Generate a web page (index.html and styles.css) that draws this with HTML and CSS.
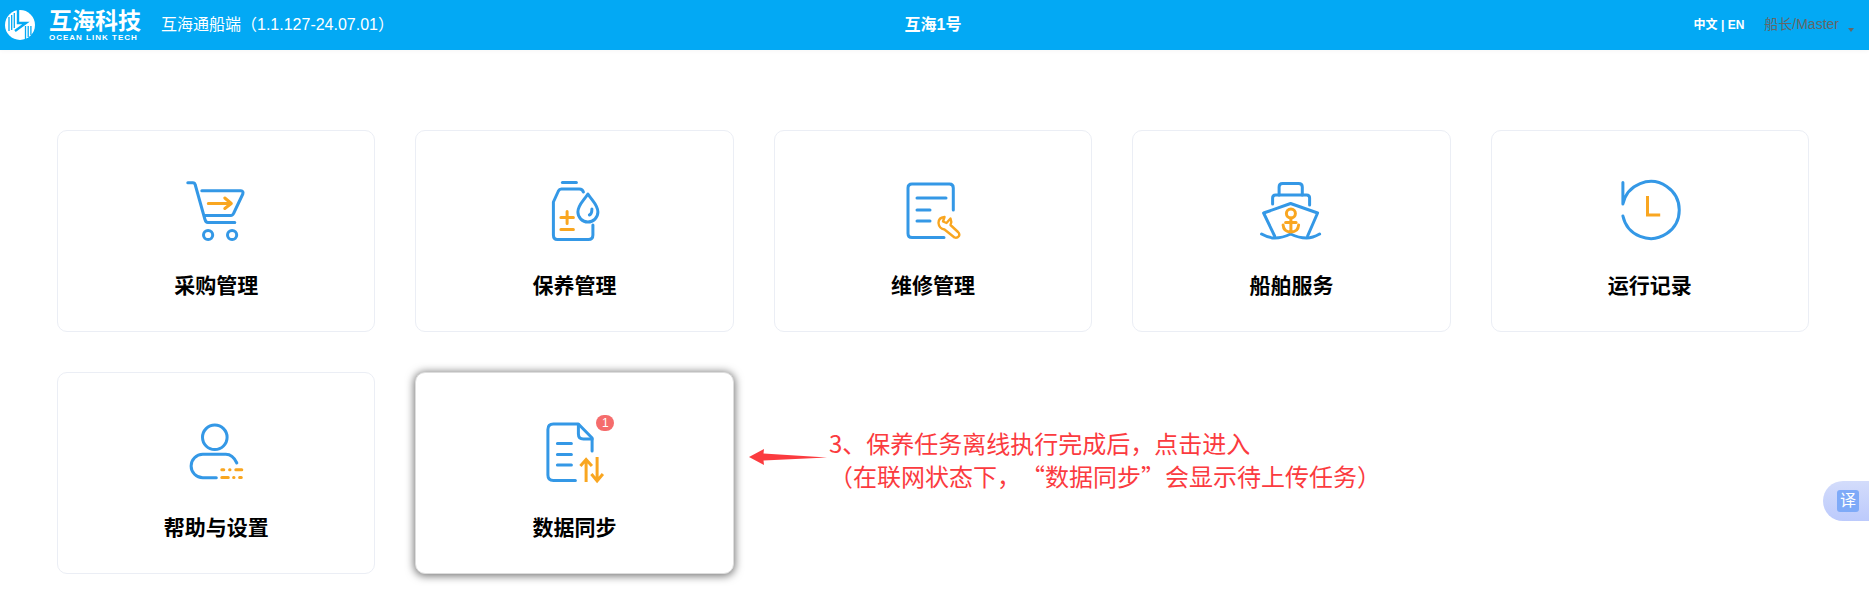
FILE: index.html
```html
<!DOCTYPE html>
<html lang="zh-CN">
<head>
<meta charset="UTF-8">
<title>互海通船端</title>
<link rel="stylesheet" href="styles.css">
</head>
<body>
  <!-- Top bar -->
  <header class="topbar">
    <div class="topbar-left">
      <div class="logo">
        <svg class="logo-mark" viewBox="0 0 30 30">
          <circle cx="15" cy="15" r="15" fill="#fff"/>
          <path d="M4 7V21M6.700 5V20M9.300 3V18" stroke="#03a9f4" stroke-width="1.300" fill="none"/>
          <path d="M13 0V13H21L10 21" stroke="#03a9f4" stroke-width="2.400" fill="none"/>
          <path d="M20.500 16V29M23.200 16V27M25.900 16V25" stroke="#03a9f4" stroke-width="1.300" fill="none"/>
        </svg>
        <div class="logo-text">
          <div class="logo-cn">互海科技</div>
          <div class="logo-en">OCEAN LINK TECH</div>
        </div>
      </div>
      <div class="app-name">互海通船端（1.1.127-24.07.01）</div>
    </div>
    <div class="ship-name">互海1号</div>
    <div class="topbar-right">
      <span class="lang">中文 | EN</span>
      <span class="user">船长/Master</span>
      <span class="caret"></span>
    </div>
  </header>

  <!-- Module cards -->
  <main class="modules">
    <a class="card">
      <svg class="card-icon" viewBox="6.200 0 100 80">
        <g class="blue">
          <path d="M28 12.700H33Q35 12.700 35.500 15L45 49Q46 52.500 48 52.500H75"/>
          <path d="M42 20.700H81Q84 21 83 24L74 43Q73 45.500 71 45.500H45"/>
          <circle cx="48.300" cy="65" r="4.600"/>
          <circle cx="72.300" cy="65" r="4.600"/>
        </g>
        <path class="orange" d="M48.500 33.500H71M65 28L71.500 33.500L65 38.500"/>
      </svg>
      <div class="card-title">采购管理</div>
    </a>
    <a class="card">
      <svg class="card-icon" viewBox="-5.400 0 100 80">
        <g class="blue">
          <path d="M32 12.500H46"/>
          <path d="M53 22Q52 19 49 19H31Q29 19 28 21L23 32V65Q23 69.500 27 69.500H58Q62.500 69.500 62.500 65V55"/>
          <path d="M57.500 24C62 31 67.500 35 67.500 42A10 10 0 0 1 47.500 42C47.500 35 53 31 57.500 24Z"/>
          <path d="M61.500 39Q61.500 44 59 45"/>
        </g>
        <path class="orange" d="M30.500 47.500H43M36.700 41.500V53.500M30.500 59.500H43"/>
      </svg>
      <div class="card-title">保养管理</div>
    </a>
    <a class="card">
      <svg class="card-icon" viewBox="-7 0 100 80">
        <g class="blue">
          <path d="M63.300 40V18Q63.300 14 59.500 14H22Q18 14 18 18V63.500Q18 67.500 22 67.500H54"/>
          <path d="M27 28H56M27 40H40M27 51H40"/>
        </g>
        <path class="orange thin" d="M54.500 47Q48.500 47.500 48.500 53Q49 58.500 54.500 59.500L64.500 67.500Q67 68.500 69 66Q70 64 68 62L60.500 55Q62 51.500 60.500 48.500L56.500 53L53 51.500Z"/>
      </svg>
      <div class="card-title">维修管理</div>
    </a>
    <a class="card">
      <svg class="card-icon" viewBox="-8.600 0 100 80">
        <g class="blue">
          <path d="M29.500 25V17Q29.500 13.500 33 13.500H49Q52.700 13.500 52.700 17V25"/>
          <path d="M23 34V28Q23 25 26 25H57Q60 25 60 28V35"/>
          <path d="M25 66L14 43L41 33.500L68 43L58 66"/>
          <path d="M12 64Q19 68 25 68Q33 68 41 64Q49 68 57 68Q63 68 70 64"/>
        </g>
        <g class="orange">
          <circle cx="41.300" cy="43.500" r="4.500"/>
          <path d="M41.300 48V62M36 52.500H46.500M33.500 55Q34 62 41.300 62Q48.500 62 49 55"/>
        </g>
      </svg>
      <div class="card-title">船舶服务</div>
    </a>
    <a class="card">
      <svg class="card-icon" viewBox="-0.200 0 100 80">
        <path class="blue" d="M22.700 12.500V34A28.500 28.500 0 1 1 22.700 46"/>
        <path class="orange butt" d="M47.300 26V45H60"/>
      </svg>
      <div class="card-title">运行记录</div>
    </a>
    <a class="card">
      <svg class="card-icon" viewBox="-3.800 2 100 80">
        <g class="blue">
          <circle cx="45" cy="27.300" r="12.300"/>
          <path d="M46.500 67.700H33A11.700 11.700 0 0 1 33 44.300H56Q63 44.300 67 53"/>
        </g>
        <path class="orange" d="M52 59.700H54M59.800 59.700H60.200M66 59.700H72M52 67.500H58.500M63.800 67.500H64.200M69.800 67.500H71.500"/>
      </svg>
      <div class="card-title">帮助与设置</div>
    </a>
    <a class="card card-hover">
      <svg class="card-icon" viewBox="-5.400 2 100 80">
        <g class="blue">
          <path d="M61.700 41V28L48 14H23Q17.500 14 17.500 19.500V65Q17.500 70.500 23 70.500H45"/>
          <path d="M48 14.500V24Q48 29 53 29H61.700"/>
          <path d="M27 33.500H41M27 44.500H41M27 55H41"/>
        </g>
        <path class="orange butt" d="M55.700 72V49.500M50 56L55.700 49.500L61.500 56M66.700 47V71M61 64L66.700 71L72.500 64"/>
      </svg>
      <span class="badge">1</span>
      <div class="card-title">数据同步</div>
    </a>
  </main>

  <!-- Annotation drawn over the page -->
  <svg class="note-arrow" viewBox="0 0 80 20">
    <path d="M0 9L15 1L14.500 5.500L78 9.500L14.500 12.500L15 17Z" fill="#fb3b3f"/>
  </svg>
  <div class="note">
    <div>3、保养任务离线执行完成后，点击进入</div>
    <div>（在联网状态下，“数据同步”会显示待上传任务）</div>
  </div>

  <div class="translate"><span class="translate-btn">译</span></div>
</body>
</html>
```

FILE: styles.css
```css
* { box-sizing: border-box; margin: 0; padding: 0; }
html, body { height: 100%; overflow: hidden; }
body {
  position: relative;
  background: #fff;
  font-family: "Liberation Sans", "Noto Sans CJK SC", sans-serif;
  color: #000;
}

/* Top bar */
.topbar {
  display: grid;
  grid-template-columns: 1fr auto 1fr;
  align-items: center;
  height: 50px;
  padding: 0 15px 4px 5px;
  background: #03a9f4;
  color: #fff;
  box-shadow: 0 1px 4px rgba(0, 0, 0, 0.04);
}
.topbar-left { display: flex; align-items: center; }
.logo { display: flex; align-items: center; gap: 14px; margin-top: 4px; }
.logo-mark { width: 30px; height: 30px; }
.logo-cn { font-size: 23px; line-height: 23px; font-weight: 700; white-space: nowrap; margin-top: 2px; }
.logo-en { font-size: 8px; line-height: 9px; font-weight: 700; letter-spacing: 1px; white-space: nowrap; }
.app-name { margin-left: 20px; font-size: 16px; white-space: nowrap; }
.ship-name { font-size: 16px; font-weight: 700; padding-left: 7px; }
.topbar-right { display: flex; align-items: center; justify-content: flex-end; }
.lang { font-size: 12px; font-weight: 700; }
.user { margin-left: 20px; font-size: 14px; color: #666; }
.caret {
  margin: 14px 0 0 9px;
  border-style: solid;
  border-width: 4px 3.500px 0;
  border-color: #666 transparent transparent;
}

/* Module cards */
.modules {
  display: grid;
  grid-template-columns: repeat(5, 1fr);
  grid-auto-rows: 202px;
  gap: 40px;
  padding: 80px 60px 0 57px;
}
.card {
  position: relative;
  display: flex;
  flex-direction: column;
  align-items: center;
  padding-top: 39px;
  background: #fff;
  border: 1px solid #ebeef5;
  border-radius: 10px;
}
.card-hover {
  border-color: #ddd;
  box-shadow: 0 1px 8px 1px rgba(0, 0, 0, 0.55);
}
.card-icon { display: block; width: 100px; height: 80px; flex: none; }
.card-title { margin-top: 22px; font-size: 21px; line-height: 28px; font-weight: 700; }

.blue, .blue * { fill: none; stroke: #3498e6; stroke-width: 3; stroke-linecap: round; stroke-linejoin: round; }
.orange, .orange * { fill: none; stroke: #f9a620; stroke-width: 3; stroke-linecap: round; stroke-linejoin: round; }
.orange.butt { stroke-linecap: butt; stroke-linejoin: miter; }
.orange.thin { stroke-width: 2.400; }

.badge {
  position: absolute;
  top: 42px;
  left: 180px;
  width: 18px;
  height: 16px;
  border-radius: 8px;
  background: #f56c6c;
  color: #fff;
  font-size: 12px;
  line-height: 16px;
  text-align: center;
}

/* Annotation */
.note-arrow {
  position: absolute;
  left: 749px;
  top: 448px;
  width: 80px;
  height: 20px;
}
.note {
  position: absolute;
  left: 829px;
  top: 426px;
  font-family: "Noto Sans CJK SC", "Liberation Sans", sans-serif;
  font-size: 24px;
  line-height: 33px;
  color: #fb3b3f;
  white-space: nowrap;
  text-spacing-trim: space-all;
  font-feature-settings: "palt" 0, "chws" 0;
}

/* Translate widget */
.translate {
  position: absolute;
  right: 0;
  top: 481px;
  display: flex;
  align-items: center;
  width: 46px;
  height: 40px;
  padding-left: 14px;
  border-radius: 20px 0 0 20px;
  background: linear-gradient(180deg, #d3dcfb, #bccafc);
}
.translate-btn {
  width: 22px;
  height: 22px;
  border-radius: 3px;
  background: #7eaaf8;
  color: #fff;
  font-size: 16px;
  line-height: 22px;
  text-align: center;
}
```
